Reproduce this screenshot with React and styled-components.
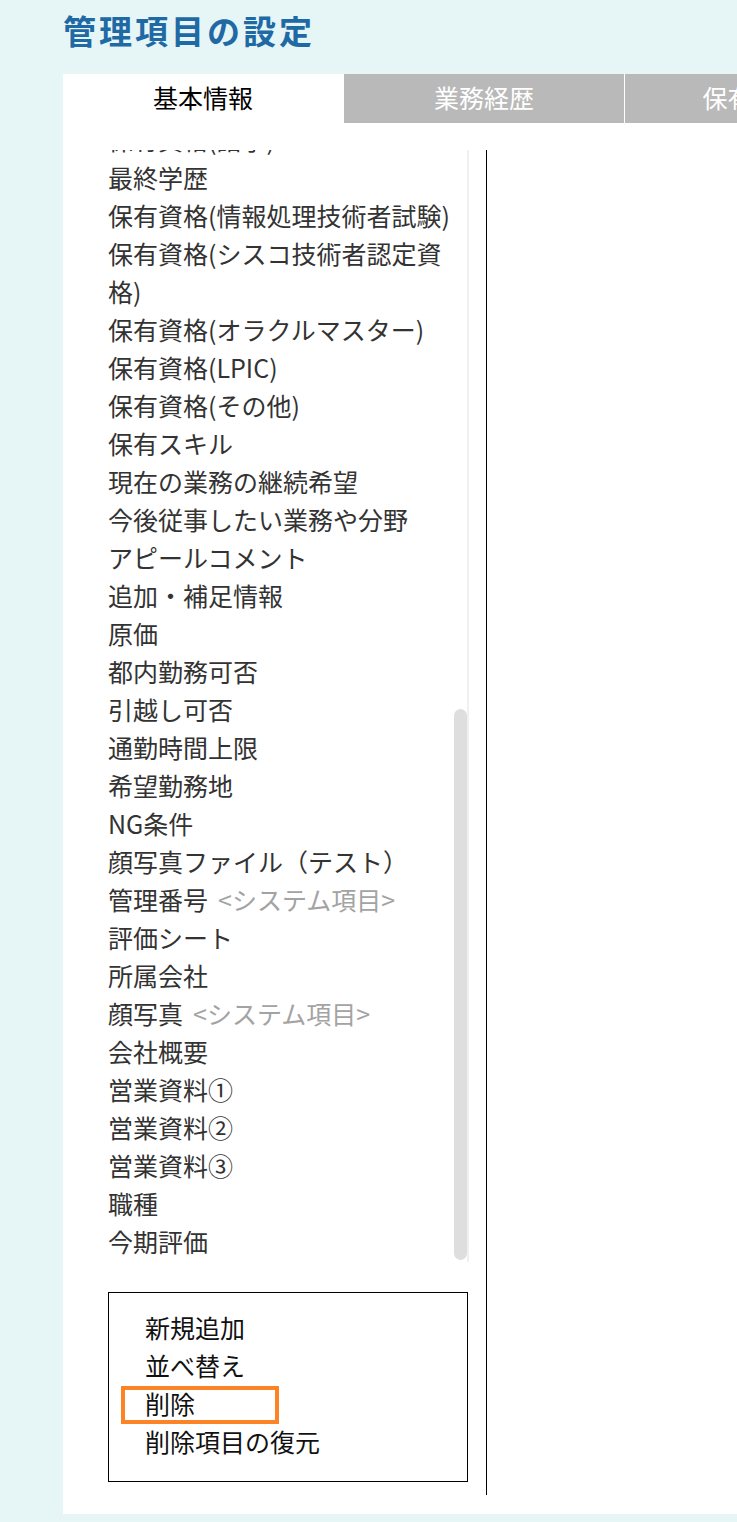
import React, { useLayoutEffect, useRef, useState } from "react";
import styled, { createGlobalStyle } from "styled-components";

const hiddenItems = [
    "氏名",
    "氏名（カナ）",
    "イニシャル",
    "性別",
    "生年月日",
    "年齢",
    "国籍",
    "郵便番号",
    "住所",
    "最寄駅",
    "最寄路線",
    "電話番号",
    "携帯電話番号",
    "メールアドレス",
    "携帯メールアドレス",
    "緊急連絡先",
    "婚姻状況",
    "扶養家族",
    "入社日",
    "雇用形態",
    "所属部署",
    "役職",
    "稼働状況",
    "稼働開始可能日",
    "希望単価",
    "希望職種",
    "経験年数",
    "得意分野",
    "語学力",
    "保有資格(語学)",
];

const items = [
    ...hiddenItems.map((label) => ({ label })),
    { label: "最終学歴" },
    { label: "保有資格(情報処理技術者試験)" },
    { label: "保有資格(シスコ技術者認定資格)" },
    { label: "保有資格(オラクルマスター)" },
    { label: "保有資格(LPIC)" },
    { label: "保有資格(その他)" },
    { label: "保有スキル" },
    { label: "現在の業務の継続希望" },
    { label: "今後従事したい業務や分野" },
    { label: "アピールコメント" },
    { label: "追加・補足情報" },
    { label: "原価" },
    { label: "都内勤務可否" },
    { label: "引越し可否" },
    { label: "通勤時間上限" },
    { label: "希望勤務地" },
    { label: "NG条件" },
    { label: "顔写真ファイル（テスト）" },
    { label: "管理番号", system: true },
    { label: "評価シート" },
    { label: "所属会社" },
    { label: "顔写真", system: true },
    { label: "会社概要" },
    { label: "営業資料①" },
    { label: "営業資料②" },
    { label: "営業資料③" },
    { label: "職種" },
    { label: "今期評価" },
];

const tabs = ["基本情報", "業務経歴", "保有資格等"];

const actions = ["新規追加", "並べ替え", "削除", "削除項目の復元"];

function App() {
    const listRef = useRef(null);
    const [thumb, setThumb] = useState({ top: 0, height: 0 });

    // the capture shows the list scrolled all the way down
    useLayoutEffect(() => {
        const el = listRef.current;
        if (!el) return;
        el.scrollTop = el.scrollHeight;
        const ratio = el.clientHeight / el.scrollHeight;
        const height = Math.round(el.clientHeight * ratio);
        const top = Math.round(el.scrollTop * ratio);
        setThumb({ top, height });
    }, []);

    return (
        <Page>
            <GlobalStyle />
            <Title>管理項目の設定</Title>
            <Panel>
                <Tabs>
                    {tabs.map((tab, i) => (
                        <Tab key={tab} active={i === 0}>
                            {tab}
                        </Tab>
                    ))}
                </Tabs>
                <Body>
                    <ItemColumn>
                        <ListFrame>
                            <ItemList ref={listRef}>
                                {items.map((item) => (
                                    <Item key={item.label}>
                                        {item.label}
                                        {item.system && (
                                            <SystemTag>
                                                &lt;システム項目&gt;
                                            </SystemTag>
                                        )}
                                    </Item>
                                ))}
                            </ItemList>
                            <ScrollTrack>
                                <ScrollThumb
                                    style={{
                                        top: thumb.top,
                                        height: thumb.height,
                                    }}
                                />
                            </ScrollTrack>
                        </ListFrame>
                        <ActionBox>
                            {actions.map((action) => (
                                <Action
                                    key={action}
                                    highlighted={action === "削除"}
                                >
                                    {action}
                                </Action>
                            ))}
                        </ActionBox>
                    </ItemColumn>
                </Body>
            </Panel>
        </Page>
    );
}

export default App;

const GlobalStyle = createGlobalStyle`
    html, body {
        margin: 0;
        padding: 0;
        background: #e6f6f7;
    }

    body {
        font-family: "Noto Sans CJK JP", "Noto Sans", sans-serif;
        overflow: hidden;
    }
`;

const Page = styled.div`
    width: 737px;
    height: 1522px;
    padding-left: 63px;
    box-sizing: border-box;
    overflow: hidden;
`;

const Title = styled.h1`
    margin: 0;
    height: 74px;
    padding-bottom: 14px;
    box-sizing: border-box;
    display: flex;
    align-items: center;
    color: #1f69a5;
    font-size: 33px;
    font-weight: 700;
    letter-spacing: 3px;
    white-space: nowrap;
`;

const Panel = styled.div`
    width: 1000px;
    height: 1440px;
    background: #fff;
`;

const Tabs = styled.div`
    display: flex;
    gap: 1px;
    height: 49px;
`;

const Tab = styled.div`
    flex: 0 0 280px;
    display: flex;
    align-items: center;
    justify-content: center;
    padding-bottom: 4px;
    box-sizing: border-box;
    font-size: 25px;
    background: ${(p) => (p.active ? "#fff" : "#b9b9b9")};
    color: ${(p) => (p.active ? "#000" : "#fff")};
`;

const Body = styled.div`
    display: flex;
    padding-top: 27px;
    padding-left: 45px;
`;

const ItemColumn = styled.div`
    width: 361px;
    height: 1345px;
    padding-right: 17px;
    border-right: 1px solid #000;
    display: flex;
    flex-direction: column;
    gap: 30px;
`;

const ListFrame = styled.div`
    display: flex;
    height: 1112px;
`;

const ItemList = styled.ul`
    flex: 1;
    list-style: none;
    margin: 0;
    padding: 0 0 2px;
    overflow: hidden;
    font-size: 25px;
    line-height: 38px;
    color: #333;
`;

const Item = styled.li`
    margin: 0;
`;

const SystemTag = styled.span`
    margin-left: 10px;
    color: #a3a3a3;
`;

const ScrollTrack = styled.div`
    position: relative;
    flex: 0 0 15px;
    background: #fff;
    box-shadow: inset -2px 0 0 #f0f0f0;
`;

const ScrollThumb = styled.div`
    position: absolute;
    left: 0;
    width: 13px;
    margin-top: -2px;
    border-radius: 7px;
    background: #dedede;
`;

const ActionBox = styled.div`
    width: 360px;
    height: 190px;
    box-sizing: border-box;
    border: 1px solid #000;
    padding: 15px 0 0 36px;
`;

const Action = styled.div`
    position: relative;
    font-size: 25px;
    line-height: 38px;
    color: #111;

    &::after {
        content: "";
        display: ${(p) => (p.highlighted ? "block" : "none")};
        position: absolute;
        left: -24px;
        top: 2px;
        width: 158px;
        height: 38px;
        box-sizing: border-box;
        border: 4px solid #fd8327;
    }
`;
